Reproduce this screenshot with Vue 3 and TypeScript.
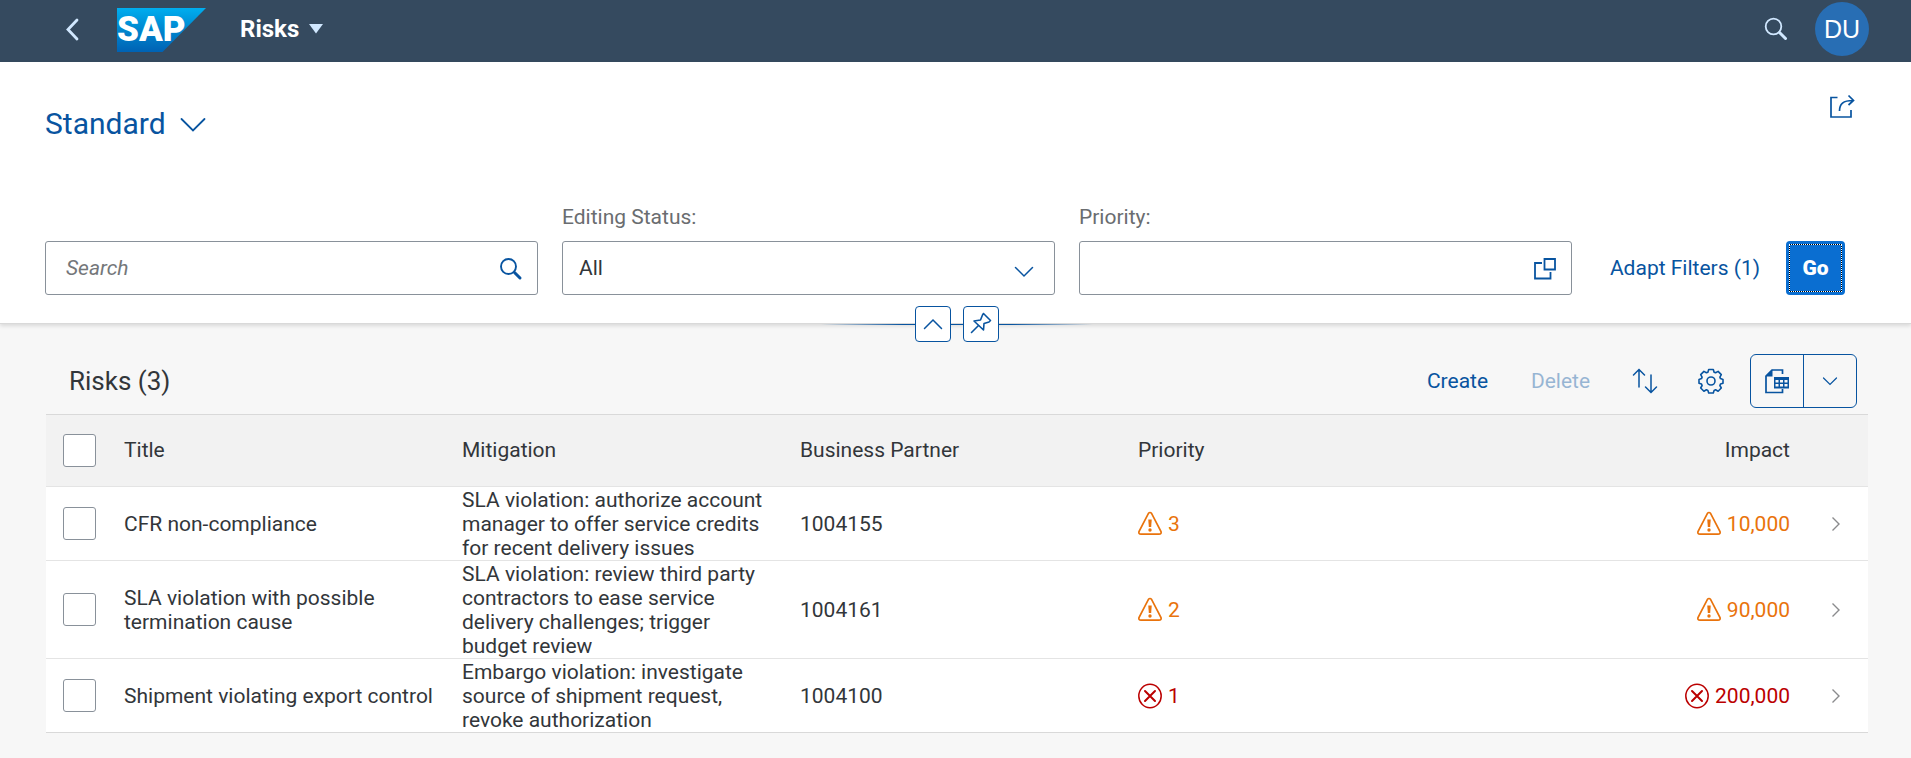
<script setup lang="ts">
import { ref } from 'vue'

type State = 'warning' | 'error'

interface Risk {
  id: number
  title: string
  mitigation: string
  partner: string
  priority: number
  impact: string
  state: State
}

const risks: Risk[] = [
  {
    id: 1,
    title: 'CFR non-compliance',
    mitigation: 'SLA violation: authorize account manager to offer service credits for recent delivery issues',
    partner: '1004155',
    priority: 3,
    impact: '10,000',
    state: 'warning',
  },
  {
    id: 2,
    title: 'SLA violation with possible termination cause',
    mitigation: 'SLA violation: review third party contractors to ease service delivery challenges; trigger budget review',
    partner: '1004161',
    priority: 2,
    impact: '90,000',
    state: 'warning',
  },
  {
    id: 3,
    title: 'Shipment violating export control',
    mitigation: 'Embargo violation: investigate source of shipment request, revoke authorization',
    partner: '1004100',
    priority: 1,
    impact: '200,000',
    state: 'error',
  },
]

const query = ref('')
const status = ref('All')
const priority = ref('')
const selected = ref<number[]>([])

function toggleAll(event: Event) {
  const checked = (event.target as HTMLInputElement).checked
  selected.value = checked ? risks.map((r) => r.id) : []
}
</script>

<template>
  <div class="app">
    <header class="shell">
      <button class="icon-btn back" type="button" aria-label="Back">
        <svg width="16" height="24" viewBox="0 0 16 24"><path d="M13 3 4 12.500l9 9.500" fill="none" stroke="currentColor" stroke-width="2.800" stroke-linecap="round" /></svg>
      </button>
      <a class="logo" href="#" aria-label="Home">
        <svg width="89" height="44" viewBox="0 0 89 44" aria-hidden="true">
          <defs>
            <linearGradient id="logoFill" x1="0" y1="0" x2="0" y2="1">
              <stop offset="0" stop-color="#00aeef" />
              <stop offset="0.500" stop-color="#0086ce" />
              <stop offset="1" stop-color="#0062b4" />
            </linearGradient>
          </defs>
          <path d="M0 0H89L45.500 44H0Z" fill="url(#logoFill)" />
        </svg>
        <span class="logo-text">SAP</span>
      </a>
      <button class="shell-title" type="button">
        Risks
        <svg width="14" height="10" viewBox="0 0 14 10"><path d="M0 0H14L7 9.500Z" fill="#d1e8ff" /></svg>
      </button>
      <span class="grow"></span>
      <button class="icon-btn shell-search" type="button" aria-label="Search">
        <svg width="24" height="24" viewBox="0 0 24 24" fill="none" stroke="currentColor">
          <circle cx="9.500" cy="9.500" r="7.800" stroke-width="1.800" />
          <path d="M15.500 15.500 21.500 21.500" stroke-width="3" stroke-linecap="round" />
        </svg>
      </button>
      <button class="avatar" type="button" aria-label="User DU">DU</button>
    </header>

    <section class="filter-header">
      <div class="variant-row">
        <button class="variant" type="button">
          Standard
          <svg width="26" height="16" viewBox="0 0 26 16"><path d="M1.500 3 13 14.500 24.500 3" fill="none" stroke="currentColor" stroke-width="1.800" stroke-linecap="round" /></svg>
        </button>
        <button class="icon-btn share" type="button" aria-label="Share">
          <svg width="26" height="26" viewBox="0 0 26 26" fill="none" stroke="currentColor" stroke-width="1.700">
            <path d="M8.500 3.500H2V23H22V16" />
            <path d="M10.500 17C10.500 10 14 6.500 24 6.500M19.500 1.500 24.500 6.500 19.500 11" />
          </svg>
        </button>
      </div>

      <div class="filters">
        <div class="field">
          <div class="box">
            <input v-model="query" class="control search-input" type="text" placeholder="Search" aria-label="Search" />
            <svg class="box-icon" width="24" height="24" viewBox="0 0 24 24" fill="none" stroke="currentColor">
              <circle cx="9.500" cy="9.500" r="7.500" stroke-width="1.900" />
              <path d="M15.500 15.500 21 21" stroke-width="3" stroke-linecap="round" />
            </svg>
          </div>
        </div>
        <div class="field">
          <label class="label" for="status">Editing Status:</label>
          <div class="box">
            <select id="status" v-model="status" class="control">
              <option>All</option>
            </select>
            <svg class="box-icon drop" width="20" height="12" viewBox="0 0 20 12"><path d="M1.500 1.500 10 10 18.500 1.500" fill="none" stroke="currentColor" stroke-width="1.500" stroke-linecap="round" /></svg>
          </div>
        </div>
        <div class="field">
          <label class="label" for="priority">Priority:</label>
          <div class="box">
            <input id="priority" v-model="priority" class="control" type="text" />
            <svg class="box-icon" width="24" height="24" viewBox="0 0 24 24" fill="none" stroke="currentColor" stroke-width="1.800">
              <path d="M11.500 2H22V12.500H11.500Z" />
              <path d="M9 6H2V21.500H17.500V15" />
            </svg>
          </div>
        </div>
        <div class="filter-actions">
          <button class="link-btn adapt" type="button">Adapt Filters (1)</button>
          <button class="go" type="button"><span>Go</span></button>
        </div>
      </div>

      <div class="handle">
        <button class="handle-btn" type="button" aria-label="Collapse header">
          <svg width="20" height="12" viewBox="0 0 20 12"><path d="M1.500 10.500 10 2 18.500 10.500" fill="none" stroke="currentColor" stroke-width="1.500" stroke-linecap="round" /></svg>
        </button>
        <button class="handle-btn" type="button" aria-label="Pin header">
          <svg width="22" height="24" viewBox="0 0 22 24" fill="none" stroke="currentColor" stroke-width="1.600" stroke-linejoin="round">
            <path d="M13.500 1.500 20.500 8.500 19 10 14 11.500 13.500 18 4 9 10.500 8 12.500 3Z" />
            <path d="M8.500 13.500 1.500 20.500" stroke-linecap="round" />
          </svg>
        </button>
      </div>
    </section>

    <main class="content">
      <div class="toolbar">
        <h2>Risks (3)</h2>
        <span class="grow"></span>
        <button class="link-btn tool-text" type="button">Create</button>
        <button class="link-btn tool-text" type="button" disabled>Delete</button>
        <button class="icon-btn tool-icon" type="button" aria-label="Sort">
          <svg width="26" height="26" viewBox="0 0 26 26" fill="none" stroke="currentColor" stroke-width="1.500" stroke-linecap="round">
            <path d="M7 19V2M1.500 7 7 1.500 12.500 7" />
            <path d="M19 7V24M13.500 19 19 24.500 24.500 19" />
          </svg>
        </button>
        <button class="icon-btn tool-icon" type="button" aria-label="Settings">
          <svg width="26" height="26" viewBox="0 0 26 26" fill="none" stroke="currentColor" stroke-width="1.600" stroke-linejoin="round">
            <path d="M10.700 1.500h4.600l.8 2.700 1.500.6 2.500-1.400 3.200 3.200-1.400 2.500.6 1.500 2.500.8v3.800l-2.500.8-.6 1.500 1.400 2.500-3.200 3.200-2.500-1.400-1.500.6-.8 2.600h-4.600l-.8-2.600-1.500-.6-2.500 1.400-3.200-3.200 1.400-2.500-.6-1.500-2.500-.8v-3.800l2.500-.8.600-1.500-1.400-2.500 3.200-3.200 2.500 1.400 1.500-.6Z" />
            <circle cx="13" cy="13" r="4" />
          </svg>
        </button>
        <div class="split">
          <button type="button" aria-label="Export">
            <svg width="26" height="26" viewBox="0 0 26 26" fill="none" stroke="currentColor" stroke-width="1.700">
              <path d="M18.500 6V2H8L2 8V24.500H18.500V21" />
              <path d="M1.500 8.500 8.500 1.500V8.500Z" fill="currentColor" stroke="none" />
              <path d="M10 9H25V20.500H10Z" fill="currentColor" stroke="none" />
              <path d="M11.500 12h3v2.500h-3zM16 12h3v2.500h-3zM20.500 12h3v2.500h-3zM11.500 16h3v2.500h-3zM16 16h3v2.500h-3zM20.500 16h3v2.500h-3z" fill="#f7f7f7" stroke="none" />
            </svg>
          </button>
          <button type="button" aria-label="More export options">
            <svg width="16" height="12" viewBox="0 0 16 12"><path d="M1.500 3 8 9.500 14.500 3" fill="none" stroke="currentColor" stroke-width="1.200" stroke-linecap="round" /></svg>
          </button>
        </div>
      </div>

      <table>
        <colgroup>
          <col class="col-edge" />
          <col span="5" />
          <col class="col-edge" />
        </colgroup>
        <thead>
          <tr>
            <th class="check"><input type="checkbox" aria-label="Select all" :checked="selected.length === risks.length" @change="toggleAll" /></th>
            <th>Title</th>
            <th>Mitigation</th>
            <th>Business Partner</th>
            <th>Priority</th>
            <th class="num">Impact</th>
            <th></th>
          </tr>
        </thead>
        <tbody>
          <tr v-for="risk in risks" :key="risk.id">
            <td class="check"><input v-model="selected" type="checkbox" :value="risk.id" :aria-label="`Select ${risk.title}`" /></td>
            <td>{{ risk.title }}</td>
            <td>{{ risk.mitigation }}</td>
            <td>{{ risk.partner }}</td>
            <td v-for="(value, i) in [risk.priority, risk.impact]" :key="i" :class="{ num: i === 1 }">
              <span class="status" :class="risk.state">
                <svg v-if="risk.state === 'warning'" width="24" height="26" viewBox="0 0 24 26" fill="none" stroke="currentColor">
                  <path d="M10.300 2.600Q12 .4 13.700 2.600L23 20.500Q23.700 23.200 21 23.200H3Q.3 23.200 1 20.500Z" stroke-width="1.700" />
                  <path d="M10.300 8.500h3.400l-.5 7.500h-2.400Z" fill="currentColor" stroke="none" />
                  <circle cx="12" cy="19" r="1.700" fill="currentColor" stroke="none" />
                </svg>
                <svg v-else width="24" height="26" viewBox="0 0 24 26" fill="none" stroke="currentColor">
                  <ellipse cx="12" cy="13" rx="11.200" ry="11.700" stroke-width="1.500" />
                  <path d="M7 8 17 18M17 8 7 18" stroke-width="2" stroke-linecap="round" />
                </svg>
                {{ value }}
              </span>
            </td>
            <td class="nav">
              <svg width="10" height="16" viewBox="0 0 10 16"><path d="M1.500 1.500 8 8 1.500 14.500" fill="none" stroke="#8a8b8d" stroke-width="1.400" /></svg>
            </td>
          </tr>
        </tbody>
      </table>
    </main>
  </div>
</template>

<style>
body {
  background: #f7f7f7;
}
</style>

<style scoped>
.app {
  font-family: Roboto, "Liberation Sans", sans-serif;
  font-size: 21px;
  line-height: 24px;
  color: #32363a;
}

.app *,
.app *::before {
  box-sizing: border-box;
}

button {
  font: inherit;
  margin: 0;
  padding: 0;
  border: 0;
  background: none;
  cursor: pointer;
}

svg {
  display: block;
  flex: none;
}

.grow {
  flex: 1;
}

.icon-btn,
.link-btn,
.share,
.variant {
  color: #0854a0;
}

.icon-btn {
  display: flex;
  align-items: center;
  justify-content: center;
}

.shell {
  display: flex;
  align-items: center;
  height: 62px;
  padding: 0 42px 4px 64px;
  background: #354a5f;
}

.back,
.shell-search {
  color: #d1e8ff;
}

.logo {
  position: relative;
  margin: 2px 0 0 37px;
}

.logo-text {
  position: absolute;
  inset: 0;
  font-size: 35px;
  font-weight: 900;
  line-height: 44px;
  color: #fff;
}

.shell-title {
  display: flex;
  align-items: center;
  gap: 10px;
  margin-left: 34px;
  font-size: 24px;
  font-weight: 700;
  line-height: 28px;
  color: #fff;
}

.avatar {
  width: 54px;
  height: 54px;
  margin-left: 27px;
  border-radius: 50%;
  background: #286eb4;
  color: #fff;
  font-family: "Liberation Sans", Arial, sans-serif;
  font-size: 25px;
}

.filter-header {
  position: relative;
  padding: 28px 66px 28px 45px;
  background: #fff;
  border-bottom: 1px solid #d9d9d9;
  box-shadow: 0 2px 4px rgba(0, 0, 0, 0.12);
}

.variant-row {
  display: flex;
  justify-content: space-between;
  align-items: flex-start;
}

.variant {
  display: flex;
  align-items: center;
  gap: 14px;
  margin-top: 14px;
  font-size: 30px;
  line-height: 40px;
}

.share {
  margin: 4px -10px 0 0;
}

.filters {
  display: flex;
  align-items: flex-end;
  gap: 24px;
  margin-top: 61px;
}

.field {
  flex: 1;
  min-width: 0;
}

.label {
  display: block;
  margin-bottom: 12px;
  color: #6a6d70;
}

.box {
  position: relative;
}

.control {
  display: block;
  width: 100%;
  height: 54px;
  margin: 0;
  padding: 0 56px 0 16px;
  appearance: none;
  border: 1px solid #89919a;
  border-radius: 3px;
  background: #fff;
  color: #32363a;
  font: inherit;
}

.search-input {
  padding-left: 20px;
}

.search-input::placeholder {
  color: #74777a;
  font-style: italic;
  opacity: 1;
}

.box-icon {
  position: absolute;
  top: 16px;
  right: 15px;
  color: #0854a0;
  pointer-events: none;
}

.drop {
  top: 25px;
  right: 21px;
}

.filter-actions {
  display: flex;
  gap: 12px;
}

.adapt {
  width: 178px;
}

.go {
  width: 59px;
  height: 54px;
  padding: 3px;
  border-radius: 4px;
  background: #0a6ed1;
  color: #fff;
  font-weight: 900;
}

.go span {
  display: flex;
  align-items: center;
  justify-content: center;
  height: 100%;
  border: 1px dotted #fff;
  background: linear-gradient(#0a6ed1, #0a6ed1) padding-box, linear-gradient(#000, #000) border-box;
}

.handle {
  position: absolute;
  left: 50%;
  bottom: -19px;
  display: flex;
  justify-content: center;
  gap: 12px;
  width: 272px;
  margin-left: -135px;
}

.handle::before {
  content: "";
  position: absolute;
  inset: 18px 0 auto;
  height: 1px;
  background: linear-gradient(90deg, transparent, #0854a0 30%, #0854a0 70%, transparent);
}

.handle-btn {
  position: relative;
  display: flex;
  align-items: center;
  justify-content: center;
  width: 36px;
  height: 36px;
  border: 1px solid #0854a0;
  border-radius: 4px;
  background: #fff;
  color: #0854a0;
}

.content {
  padding: 30px 43px 24px 46px;
}

.toolbar {
  display: flex;
  align-items: center;
  padding: 0 11px 6px 23px;
}

.toolbar h2 {
  margin: 0;
  font-size: 26px;
  font-weight: 400;
  line-height: 32px;
}

.tool-text {
  width: 103px;
}

.tool-text:disabled {
  opacity: 0.4;
}

.tool-icon {
  width: 66px;
  height: 54px;
}

.split {
  display: flex;
  width: 107px;
  height: 54px;
  margin-left: 6px;
  border: 1px solid #0854a0;
  border-radius: 6px;
}

.split button {
  display: flex;
  flex: 1;
  align-items: center;
  justify-content: center;
  color: #0854a0;
}

.split button + button {
  border-left: 1px solid #0854a0;
}

table {
  width: 100%;
  table-layout: fixed;
  border-collapse: separate;
  border-spacing: 0;
  border-top: 1px solid #d9d9d9;
}

.col-edge {
  width: 66px;
}

th,
td {
  padding: 1px 12px 0;
  border-bottom: 1px solid #e4e4e4;
  text-align: left;
  font-weight: 400;
  vertical-align: middle;
}

th {
  height: 72px;
  padding-bottom: 3px;
  background: #f2f2f2;
}

td {
  background: #fff;
}

tbody tr:last-child td {
  border-bottom-color: #d9d9d9;
}

.check {
  padding: 1px 16px 1px 17px;
}

input[type="checkbox"] {
  display: block;
  appearance: none;
  width: 33px;
  height: 33px;
  margin: 0;
  border: 1px solid #89919a;
  border-radius: 3px;
  background: #fff;
}

input[type="checkbox"]:checked {
  background: #0854a0;
}

.num {
  text-align: right;
}

.status {
  display: inline-flex;
  align-items: center;
  gap: 6px;
  vertical-align: middle;
}

.warning {
  color: #e9730c;
}

.error {
  color: #bb0000;
}

.nav svg {
  margin-left: 17px;
}
</style>
